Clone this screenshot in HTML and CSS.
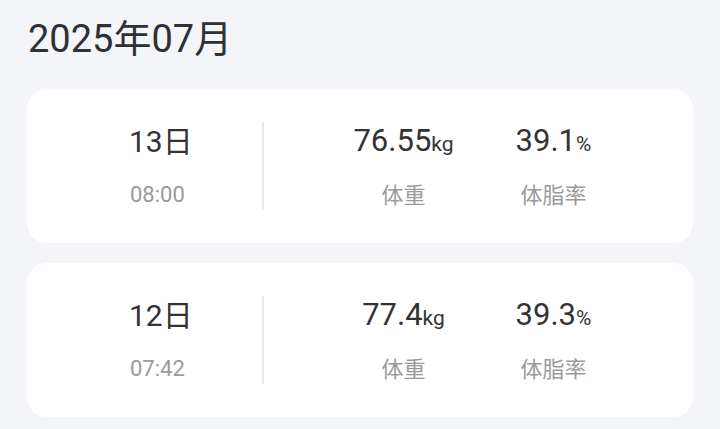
FILE: index.html
```html
<!DOCTYPE html>
<html lang="zh-CN">
<head>
    <meta charset="UTF-8">
    <meta name="viewport" content="width=device-width, initial-scale=1.0">
    <title>体重记录</title>
    <link rel="stylesheet" href="styles.css">
</head>
<body>
    <div class="month">
        <h1 class="monthTitle">2025年07月</h1>

        <div class="record">
            <div class="day">
                <span class="date">13日</span>
                <span class="time">08:00</span>
            </div>
            <div class="line"></div>
            <div class="stats">
                <div class="stat">
                    <span class="num">76.55<small>kg</small></span>
                    <span class="label">体重</span>
                </div>
                <div class="stat">
                    <span class="num">39.1<small>%</small></span>
                    <span class="label">体脂率</span>
                </div>
            </div>
        </div>

        <div class="record">
            <div class="day">
                <span class="date">12日</span>
                <span class="time">07:42</span>
            </div>
            <div class="line"></div>
            <div class="stats">
                <div class="stat">
                    <span class="num">77.4<small>kg</small></span>
                    <span class="label">体重</span>
                </div>
                <div class="stat">
                    <span class="num">39.3<small>%</small></span>
                    <span class="label">体脂率</span>
                </div>
            </div>
        </div>
    </div>
</body>
</html>
```

FILE: styles.css
```css
body
{
    margin: 0;
    background: #f4f5f9;
    font-family: Roboto, "Noto Sans CJK SC", sans-serif;
    color: #333;
}
.month
{
    padding: 17px 27px 0;
    display: flex;
    flex-direction: column;
    gap: 20px;
}
.monthTitle
{
    margin: 0 0 7px 1px;
    font-size: 38px;
    font-weight: 400;
    line-height: 45px;
    color: #2f3033;
}
.record
{
    display: flex;
    align-items: center;
    height: 154px;
    background: #fff;
    border-radius: 20px;
}
.record .day
{
    width: 133px;
    padding-left: 102px;
    display: flex;
    flex-direction: column;
    align-items: flex-start;
    gap: 23px;
}
.record .date
{
    font-size: 30px;
    line-height: 34px;
}
.record .time
{
    font-size: 22px;
    line-height: 26px;
    color: #9a9a9e;
    padding-left: 1px;
}
.record .line
{
    width: 2px;
    height: 88px;
    background: #e8e8ee;
}
.record .stats
{
    flex: 1;
    display: flex;
    justify-content: center;
}
.record .stat
{
    width: 150px;
    display: flex;
    flex-direction: column;
    align-items: center;
    gap: 22px;
}
.record .num
{
    font-size: 31px;
    line-height: 34px;
}
.record .num small
{
    font-size: 21px;
}
.record .label
{
    font-size: 22px;
    line-height: 26px;
    color: #9a9a9e;
}
```
